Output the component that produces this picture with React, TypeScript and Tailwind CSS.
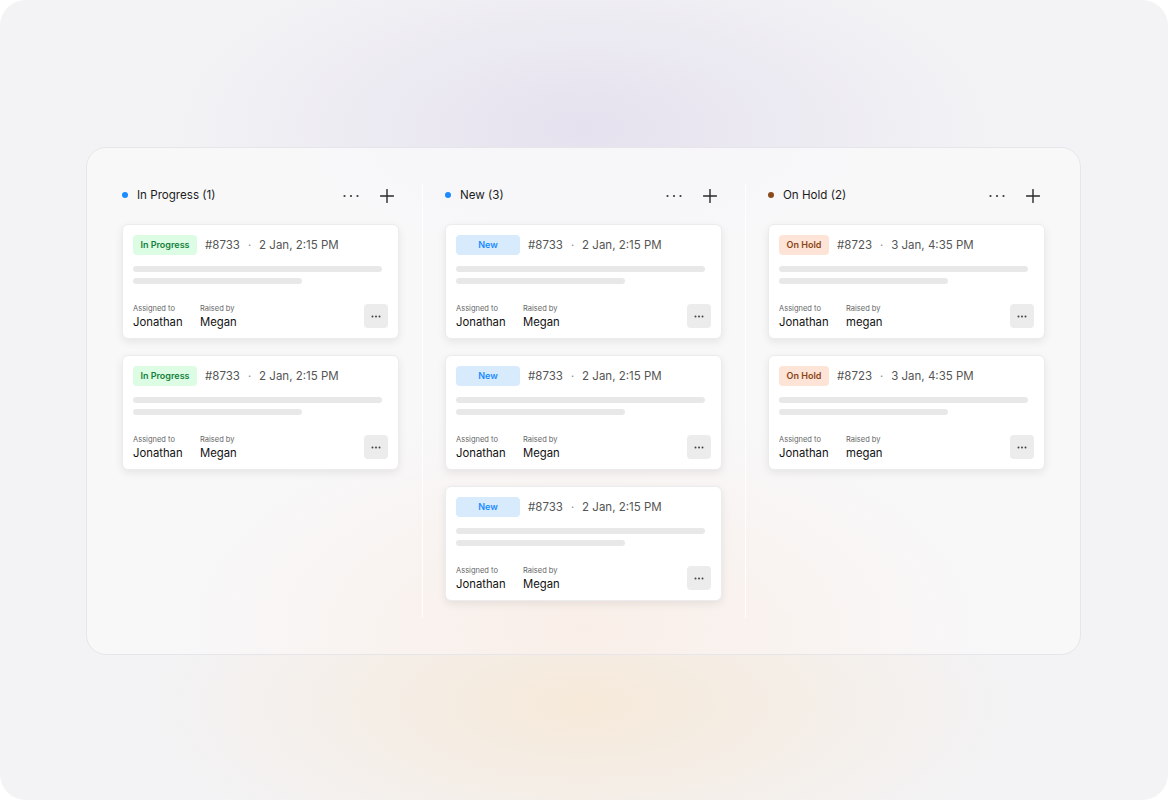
import React from "react";

type Status = "progress" | "new" | "hold";

const badgeStyles: Record<Status, { cls: string; label: string }> = {
  progress: { cls: "w-[64px] bg-[#dcfce4] text-[#16803c]", label: "In Progress" },
  new: { cls: "w-[64px] bg-[#d8ebfd] text-[#1a8cff]", label: "New" },
  hold: { cls: "w-[50px] bg-[#fde4d7] text-[#8a4517]", label: "On Hold" },
};

function Dots() {
  return (
    <svg width="16" height="4" viewBox="0 0 16 4" className="text-[#3a3a3a]">
      <circle cx="1.5" cy="2" r="1.1" fill="currentColor" />
      <circle cx="8" cy="2" r="1.1" fill="currentColor" />
      <circle cx="14.5" cy="2" r="1.1" fill="currentColor" />
    </svg>
  );
}

function PlusIcon() {
  return (
    <svg width="14" height="14" viewBox="0 0 14 14" className="text-[#2a2a2a]">
      <path d="M7 0.5V13.5M0.5 7H13.5" stroke="currentColor" strokeWidth="1.4" strokeLinecap="round" />
    </svg>
  );
}

function SmallDots() {
  return (
    <svg width="10" height="3" viewBox="0 0 10 3" className="text-[#444]">
      <circle cx="1.5" cy="1.5" r="1" fill="currentColor" />
      <circle cx="5" cy="1.5" r="1" fill="currentColor" />
      <circle cx="8.5" cy="1.5" r="1" fill="currentColor" />
    </svg>
  );
}

function Card({ status, id, date, raiser }: { status: Status; id: string; date: string; raiser: string }) {
  const b = badgeStyles[status];
  return (
    <div className="w-[277px] rounded-[6px] bg-white border border-[#ececee] shadow-[0_3px_8px_rgba(0,0,0,0.08)] pt-[10px] pl-[10px] pr-[10px] pb-[10px]">
      <div className="flex items-center h-[20px]">
        <div className={`h-[20px] rounded-[4px] flex items-center justify-center text-[9px] font-semibold ${b.cls}`}>
          {b.label}
        </div>
        <span className="ml-[8px] mt-[1px] text-[11.5px] text-[#555]">{id}</span>
        <span className="mx-[8px] mt-[1px] text-[11px] text-[#888]">·</span>
        <span className="mt-[1px] text-[11.5px] text-[#555]">{date}</span>
      </div>
      <div className="mt-[11px] h-[6px] w-[249px] rounded-full bg-[#e8e8e9]" />
      <div className="mt-[6px] h-[6px] w-[169px] rounded-full bg-[#e8e8e9]" />
      <div className="mt-[20px] flex items-end justify-between">
        <div className="flex">
          <div className="w-[67px]">
            <div className="text-[7.5px] leading-[10px] text-[#666]">Assigned to</div>
            <div className="mt-[2px] text-[11.3px] leading-[12px] text-[#111]">Jonathan</div>
          </div>
          <div>
            <div className="text-[7.5px] leading-[10px] text-[#666]">Raised by</div>
            <div className="mt-[2px] text-[11.3px] leading-[12px] text-[#111]">{raiser}</div>
          </div>
        </div>
        <div className="w-[24px] h-[24px] rounded-[4px] bg-[#ececed] flex items-center justify-center">
          <SmallDots />
        </div>
      </div>
    </div>
  );
}

function Column({
  title,
  dot,
  children,
}: {
  title: string;
  dot: string;
  children: React.ReactNode;
}) {
  return (
    <div className="w-[277px] flex flex-col">
      <div className="h-[24px] flex items-center justify-between pr-[5px]">
        <div className="flex items-center">
          <div className={`w-[6px] h-[6px] rounded-full ${dot}`} />
          <span className="ml-[9px] mt-[2px] text-[11.6px] text-[#1c1c1c]">{title}</span>
        </div>
        <div className="flex items-center gap-[21px] mt-[1px]">
          <Dots />
          <PlusIcon />
        </div>
      </div>
      <div className="mt-[17px] flex flex-col gap-[16px]">{children}</div>
    </div>
  );
}

function Divider() {
  return <div className="ml-[23px] mr-[22px] w-px h-[435px] bg-white/90" />;
}

export default function App() {
  return (
    <div className="w-[1168px] h-[800px] bg-white" style={{ fontFamily: "Inter, 'Noto Sans', sans-serif" }}>
      <div className="w-[1168px] h-[800px] rounded-[26px] overflow-hidden bg-[#f3f3f5] bg-[radial-gradient(ellipse_420px_190px_at_50%_16%,rgba(224,219,236,0.75),rgba(243,243,245,0)),radial-gradient(ellipse_440px_180px_at_50%_88%,rgba(246,232,214,0.9),rgba(243,243,245,0))] pt-[147px] pl-[86px]">
        <div className="w-[995px] h-[508px] rounded-[20px] border-[1.5px] border-[#e6e6ea] bg-[#f8f8f9]/90 bg-[radial-gradient(ellipse_420px_220px_at_50%_95%,rgba(250,236,228,0.8),rgba(248,248,249,0))] pt-[35px] pl-[35px] flex items-start">
          <Column title="In Progress (1)" dot="bg-[#1a8cff]">
            <Card status="progress" id="#8733" date="2 Jan, 2:15 PM" raiser="Megan" />
            <Card status="progress" id="#8733" date="2 Jan, 2:15 PM" raiser="Megan" />
          </Column>
          <Divider />
          <Column title="New (3)" dot="bg-[#1a8cff]">
            <Card status="new" id="#8733" date="2 Jan, 2:15 PM" raiser="Megan" />
            <Card status="new" id="#8733" date="2 Jan, 2:15 PM" raiser="Megan" />
            <Card status="new" id="#8733" date="2 Jan, 2:15 PM" raiser="Megan" />
          </Column>
          <Divider />
          <Column title="On Hold (2)" dot="bg-[#8a4a1c]">
            <Card status="hold" id="#8723" date="3 Jan, 4:35 PM" raiser="megan" />
            <Card status="hold" id="#8723" date="3 Jan, 4:35 PM" raiser="megan" />
          </Column>
        </div>
      </div>
    </div>
  );
}
